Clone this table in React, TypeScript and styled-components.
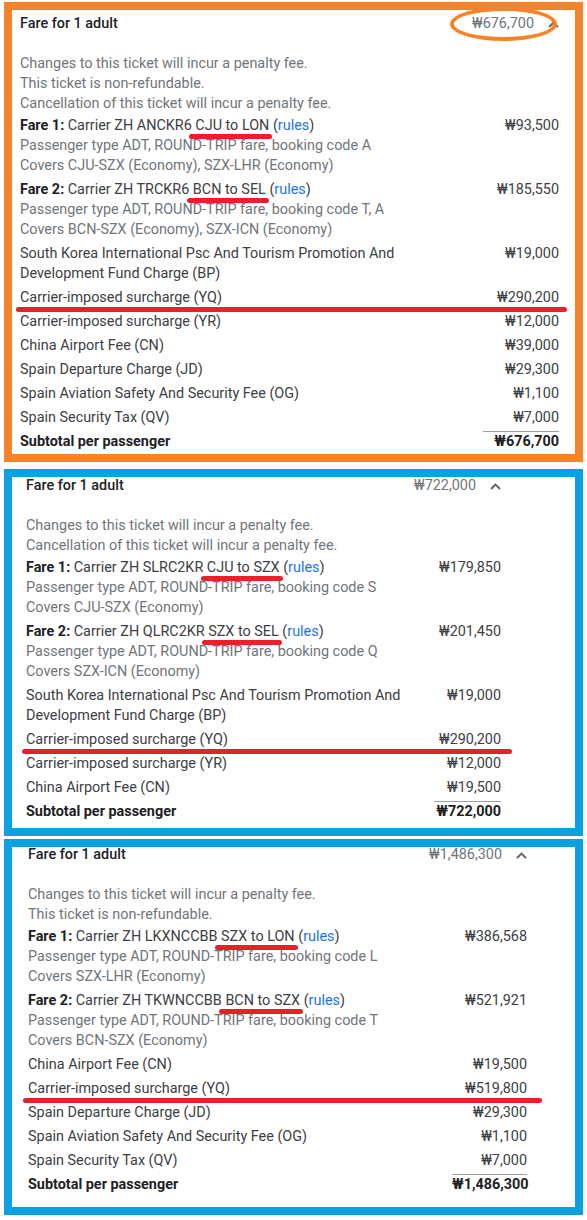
import React from 'react'
import styled, { createGlobalStyle, css } from 'styled-components'

const ORANGE = '#f6832a'
const BLUE = '#0aa0e2'
const RED = '#e8202a'

const GlobalStyle = createGlobalStyle`
  body {
    margin: 0;
    background: #fff;
    font-family: Roboto, 'Noto Sans', Arial, sans-serif;
  }
`

const Page = styled.div`
  display: flex;
  flex-direction: column;
  padding: 2px 4px 0;
`

const Panel = styled.section<{ $color: string; $padL: number; $padR: number; $padB: number; $gap: number }>`
  border: 8px solid ${({ $color }) => $color};
  padding: 0 ${({ $padR }) => $padR}px ${({ $padB }) => $padB}px ${({ $padL }) => $padL}px;
  margin-top: ${({ $gap }) => $gap}px;
  font-size: 14.4px;
  color: #3c4043;
`

const Header = styled.div<{ $shift: number }>`
  display: flex;
  align-items: center;
  justify-content: space-between;
  height: 20px;
  line-height: 20px;
  margin-top: ${({ $shift }) => $shift}px;
  margin-bottom: 20px;
`

const Title = styled.div`
  font-weight: 500;
  color: #202124;
`

const HeaderRight = styled.div`
  display: flex;
  align-items: center;
  gap: 14px;
  color: #70757a;
`

const Total = styled.span<{ $circled?: boolean }>`
  position: relative;
  ${({ $circled }) =>
    $circled &&
    css`
      &::after {
        content: '';
        position: absolute;
        left: -22px;
        right: -23px;
        top: 50%;
        height: 34px;
        margin-top: -17px;
        border: 4px solid ${ORANGE};
        border-radius: 50%;
        box-sizing: border-box;
      }
    `}
`

const Notes = styled.div`
  color: #70757a;
  line-height: 20px;
`

const Item = styled.div<{ $mark?: [number, number]; $sub?: boolean }>`
  position: relative;
  display: flex;
  justify-content: space-between;
  align-items: flex-start;
  gap: 16px;
  padding: ${({ $sub }) => ($sub ? '1px 0 2px' : '2px 0')};
  line-height: 20px;
  ${({ $mark }) =>
    $mark &&
    css`
      &::after {
        content: '';
        position: absolute;
        left: ${-$mark[0]}px;
        right: ${-$mark[1]}px;
        top: calc(100% - 3px);
        height: 5px;
        background: ${RED};
        border-radius: 3px;
      }
    `}
`

const Label = styled.div<{ $sub?: boolean }>`
  margin-top: ${({ $sub }) => ($sub ? 1 : 0)}px;
  ${({ $sub }) => $sub && 'font-weight: 700; color: #202124;'}
`

const Line = styled.div<{ $muted?: boolean }>`
  white-space: nowrap;
  color: ${({ $muted }) => ($muted ? '#70757a' : 'inherit')};
`

const Amount = styled.div<{ $rule?: number }>`
  white-space: nowrap;
  text-align: right;
  ${({ $rule }) =>
    $rule &&
    css`
      width: ${$rule}px;
      border-top: 1px solid #9aa0a6;
      font-weight: 700;
      color: #202124;
    `}
`

const Strong = styled.b`
  font-weight: 700;
  color: #202124;
`

const Route = styled.span`
  position: relative;
  &::after {
    content: '';
    position: absolute;
    left: -6px;
    right: -3px;
    bottom: -5px;
    height: 5px;
    background: ${RED};
    border-radius: 3px;
  }
`

const Rules = styled.span`
  color: #1a73e8;
`

const Chevron = () => (
  <svg width="11" height="7" viewBox="0 0 11 7">
    <path d="M1 6 L5.5 1.5 L10 6" fill="none" stroke="#5f6368" strokeWidth="1.8" />
  </svg>
)

type Fare = { carrier: string; route: string; amount: string; code: string; covers: string }
type Tax = { label: string[]; amount: string; mark?: boolean }
type FareBox = {
  color: string
  padL: number
  padR: number
  padB: number
  gap: number
  shift: number
  rule: number
  mark: [number, number]
  circled?: boolean
  total: string
  notes: string[]
  fares: Fare[]
  taxes: Tax[]
}

const CHANGES = 'Changes to this ticket will incur a penalty fee.'
const NONREF = 'This ticket is non-refundable.'
const CANCEL = 'Cancellation of this ticket will incur a penalty fee.'

const boxes: FareBox[] = [
  {
    color: ORANGE,
    padL: 8,
    padR: 16,
    padB: 0,
    gap: 0,
    shift: 4,
    rule: 76,
    mark: [4, 8],
    circled: true,
    total: '₩676,700',
    notes: [CHANGES, NONREF, CANCEL],
    fares: [
      { carrier: 'ANCKR6', route: 'CJU to LON', amount: '₩93,500', code: 'A', covers: 'Covers CJU-SZX (Economy), SZX-LHR (Economy)' },
      { carrier: 'TRCKR6', route: 'BCN to SEL', amount: '₩185,550', code: 'T, A', covers: 'Covers BCN-SZX (Economy), SZX-ICN (Economy)' },
    ],
    taxes: [
      { label: ['South Korea International Psc And Tourism Promotion And', 'Development Fund Charge (BP)'], amount: '₩19,000' },
      { label: ['Carrier-imposed surcharge (YQ)'], amount: '₩290,200', mark: true },
      { label: ['Carrier-imposed surcharge (YR)'], amount: '₩12,000' },
      { label: ['China Airport Fee (CN)'], amount: '₩39,000' },
      { label: ['Spain Departure Charge (JD)'], amount: '₩29,300' },
      { label: ['Spain Aviation Safety And Security Fee (OG)'], amount: '₩1,100' },
      { label: ['Spain Security Tax (QV)'], amount: '₩7,000' },
    ],
  },
  {
    color: BLUE,
    padL: 14,
    padR: 74,
    padB: 4,
    gap: 7,
    shift: -1,
    rule: 67,
    mark: [4, 11],
    total: '₩722,000',
    notes: [CHANGES, CANCEL],
    fares: [
      { carrier: 'SLRC2KR', route: 'CJU to SZX', amount: '₩179,850', code: 'S', covers: 'Covers CJU-SZX (Economy)' },
      { carrier: 'QLRC2KR', route: 'SZX to SEL', amount: '₩201,450', code: 'Q', covers: 'Covers SZX-ICN (Economy)' },
    ],
    taxes: [
      { label: ['South Korea International Psc And Tourism Promotion And', 'Development Fund Charge (BP)'], amount: '₩19,000' },
      { label: ['Carrier-imposed surcharge (YQ)'], amount: '₩290,200', mark: true },
      { label: ['Carrier-imposed surcharge (YR)'], amount: '₩12,000' },
      { label: ['China Airport Fee (CN)'], amount: '₩19,500' },
    ],
  },
  {
    color: BLUE,
    padL: 16,
    padR: 48,
    padB: 10,
    gap: 3,
    shift: -2,
    rule: 75,
    mark: [5, 15],
    total: '₩1,486,300',
    notes: [CHANGES, NONREF],
    fares: [
      { carrier: 'LKXNCCBB', route: 'SZX to LON', amount: '₩386,568', code: 'L', covers: 'Covers SZX-LHR (Economy)' },
      { carrier: 'TKWNCCBB', route: 'BCN to SZX', amount: '₩521,921', code: 'T', covers: 'Covers BCN-SZX (Economy)' },
    ],
    taxes: [
      { label: ['China Airport Fee (CN)'], amount: '₩19,500' },
      { label: ['Carrier-imposed surcharge (YQ)'], amount: '₩519,800', mark: true },
      { label: ['Spain Departure Charge (JD)'], amount: '₩29,300' },
      { label: ['Spain Aviation Safety And Security Fee (OG)'], amount: '₩1,100' },
      { label: ['Spain Security Tax (QV)'], amount: '₩7,000' },
    ],
  },
]

function Breakdown({ box }: { box: FareBox }) {
  return (
    <Panel $color={box.color} $padL={box.padL} $padR={box.padR} $padB={box.padB} $gap={box.gap}>
      <Header $shift={box.shift}>
        <Title>Fare for 1 adult</Title>
        <HeaderRight>
          <Total $circled={box.circled}>{box.total}</Total>
          <Chevron />
        </HeaderRight>
      </Header>
      <Notes>
        {box.notes.map((n) => (
          <div key={n}>{n}</div>
        ))}
      </Notes>
      {box.fares.map((f, i) => (
        <Item key={f.carrier}>
          <Label>
            <Line>
              <Strong>Fare {i + 1}:</Strong> Carrier ZH {f.carrier} <Route>{f.route}</Route> (<Rules>rules</Rules>)
            </Line>
            <Line $muted>Passenger type ADT, ROUND-TRIP fare, booking code {f.code}</Line>
            <Line $muted>{f.covers}</Line>
          </Label>
          <Amount>{f.amount}</Amount>
        </Item>
      ))}
      {box.taxes.map((t) => (
        <Item key={t.label[0]} $mark={t.mark ? box.mark : undefined}>
          <Label>
            {t.label.map((l) => (
              <Line key={l}>{l}</Line>
            ))}
          </Label>
          <Amount>{t.amount}</Amount>
        </Item>
      ))}
      <Item $sub>
        <Label $sub>Subtotal per passenger</Label>
        <Amount $rule={box.rule}>{box.total}</Amount>
      </Item>
    </Panel>
  )
}

export default function App() {
  return (
    <>
      <GlobalStyle />
      <Page>
        {boxes.map((b) => (
          <Breakdown key={b.total} box={b} />
        ))}
      </Page>
    </>
  )
}
